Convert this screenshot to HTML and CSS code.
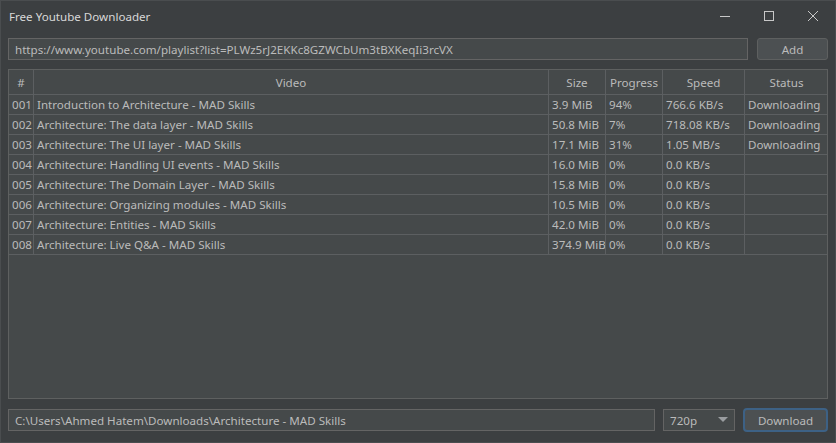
FILE: index.html
```html
<!DOCTYPE html>
<html>
<head>
<meta charset="utf-8">
<link rel="stylesheet" href="styles.css">
</head>
<body>
<div class="window">
  <div class="titlebar">
    <span class="title">Free Youtube Downloader</span>
    <div class="controls">
      <span class="ctl"><svg width="12" height="12" viewBox="0 0 12 12"><line x1="1" y1="6.5" x2="11" y2="6.5" stroke="#c8c8c8" stroke-width="1"/></svg></span>
      <span class="ctl"><svg width="12" height="12" viewBox="0 0 12 12"><rect x="1.5" y="1.5" width="9" height="9" fill="none" stroke="#c8c8c8" stroke-width="1"/></svg></span>
      <span class="ctl"><svg width="12" height="12" viewBox="0 0 12 12"><path d="M1 1 L11 11 M11 1 L1 11" stroke="#c8c8c8" stroke-width="1"/></svg></span>
    </div>
  </div>
  <div class="urlrow">
    <div class="field url">https://www.youtube.com/playlist?list=PLWz5rJ2EKKc8GZWCbUm3tBXKeqIi3rcVX</div>
    <div class="btn add">Add</div>
  </div>
  <div class="tablewrap">
    <table class="grid">
      <colgroup>
        <col class="c-num"><col class="c-video"><col class="c-size"><col class="c-prog"><col class="c-speed"><col class="c-status">
      </colgroup>
      <thead>
        <tr><th>#</th><th>Video</th><th>Size</th><th>Progress</th><th>Speed</th><th>Status</th></tr>
      </thead>
      <tbody>
        <tr><td>001</td><td>Introduction to Architecture - MAD Skills</td><td>3.9 MiB</td><td>94%</td><td>766.6 KB/s</td><td>Downloading</td></tr>
        <tr><td>002</td><td>Architecture: The data layer - MAD Skills</td><td>50.8 MiB</td><td>7%</td><td>718.08 KB/s</td><td>Downloading</td></tr>
        <tr><td>003</td><td>Architecture: The UI layer - MAD Skills</td><td>17.1 MiB</td><td>31%</td><td>1.05 MB/s</td><td>Downloading</td></tr>
        <tr><td>004</td><td>Architecture: Handling UI events - MAD Skills</td><td>16.0 MiB</td><td>0%</td><td>0.0 KB/s</td><td></td></tr>
        <tr><td>005</td><td>Architecture: The Domain Layer - MAD Skills</td><td>15.8 MiB</td><td>0%</td><td>0.0 KB/s</td><td></td></tr>
        <tr><td>006</td><td>Architecture: Organizing modules - MAD Skills</td><td>10.5 MiB</td><td>0%</td><td>0.0 KB/s</td><td></td></tr>
        <tr><td>007</td><td>Architecture: Entities - MAD Skills</td><td>42.0 MiB</td><td>0%</td><td>0.0 KB/s</td><td></td></tr>
        <tr><td>008</td><td>Architecture: Live Q&amp;A - MAD Skills</td><td>374.9 MiB</td><td>0%</td><td>0.0 KB/s</td><td></td></tr>
      </tbody>
    </table>
  </div>
  <div class="bottom">
    <div class="field path">C:\Users\Ahmed Hatem\Downloads\Architecture - MAD Skills</div>
    <div class="field combo"><span>720p</span><svg width="10" height="6" viewBox="0 0 10 6"><path d="M0 0 L10 0 L5 5 Z" fill="#9a9da0"/></svg></div>
    <div class="btn download">Download</div>
  </div>
</div>
</body>
</html>
```
FILE: styles.css
```css
html, body {
  margin: 0;
  padding: 0;
  background: #3c3f41;
}
body {
  font-family: "Noto Sans", "Open Sans", sans-serif;
  font-size: 11.6px;
  color: #bbbbbb;
  width: 836px;
  height: 443px;
  overflow: hidden;
}
.window {
  height: 443px;
  box-sizing: border-box;
  border: 1px solid #4a4d4f;
  display: flex;
  flex-direction: column;
}
.titlebar {
  height: 29px;
  display: flex;
  align-items: center;
  justify-content: space-between;
  padding-left: 8px;
}
.title {
  color: #d8d8d8;
  font-size: 11.6px;
  margin-top: 1px;
}
.controls {
  display: flex;
  height: 100%;
}
.ctl {
  width: 44px;
  display: flex;
  align-items: center;
  justify-content: center;
}
.urlrow {
  display: flex;
  gap: 9px;
  padding: 8px 7px 0 7px;
}
.field {
  box-sizing: border-box;
  height: 22px;
  background: #45494a;
  border: 1px solid #646464;
  display: flex;
  align-items: center;
  padding-left: 6px;
  white-space: nowrap;
}
.url {
  flex: 0 0 740px;
}
.btn {
  box-sizing: border-box;
  height: 22px;
  background: #4c5052;
  border: 1px solid #5e6060;
  border-radius: 3px;
  display: flex;
  align-items: center;
  justify-content: center;
}
.add {
  width: 72px;
}
.tablewrap {
  margin: 9px 7px 0 7px;
  height: 330px;
  box-sizing: border-box;
  border: 1px solid #5e6060;
  background: #45494a;
  overflow: hidden;
}
.grid {
  border-collapse: collapse;
  table-layout: fixed;
  width: 820px;
  margin: -1px 0 0 -1px;
}
.c-num { width: 25px; }
.c-video { width: 515px; }
.c-size { width: 57px; }
.c-prog { width: 57px; }
.c-speed { width: 82px; }
.c-status { width: 84px; }
.grid th, .grid td {
  border: 1px solid #5c5f61;
  white-space: nowrap;
  overflow: hidden;
}
.grid th {
  height: 24px;
  font-weight: normal;
  text-align: center;
  padding: 0;
  background: #45494a;
}
.grid td {
  height: 18px;
  line-height: 16px;
  padding: 1px 0 0 3px;
  text-align: left;
}
.bottom {
  display: flex;
  align-items: center;
  padding: 9px 7px 0 7px;
}
.path {
  flex: 0 0 647px;
}
.combo {
  margin-left: 8px;
  width: 72px;
  justify-content: space-between;
  padding-right: 6px;
}
.download {
  margin-left: 8px;
  width: 85px;
  height: 24px;
  border: 2px solid #3d6185;
  border-radius: 4px;
}
```
